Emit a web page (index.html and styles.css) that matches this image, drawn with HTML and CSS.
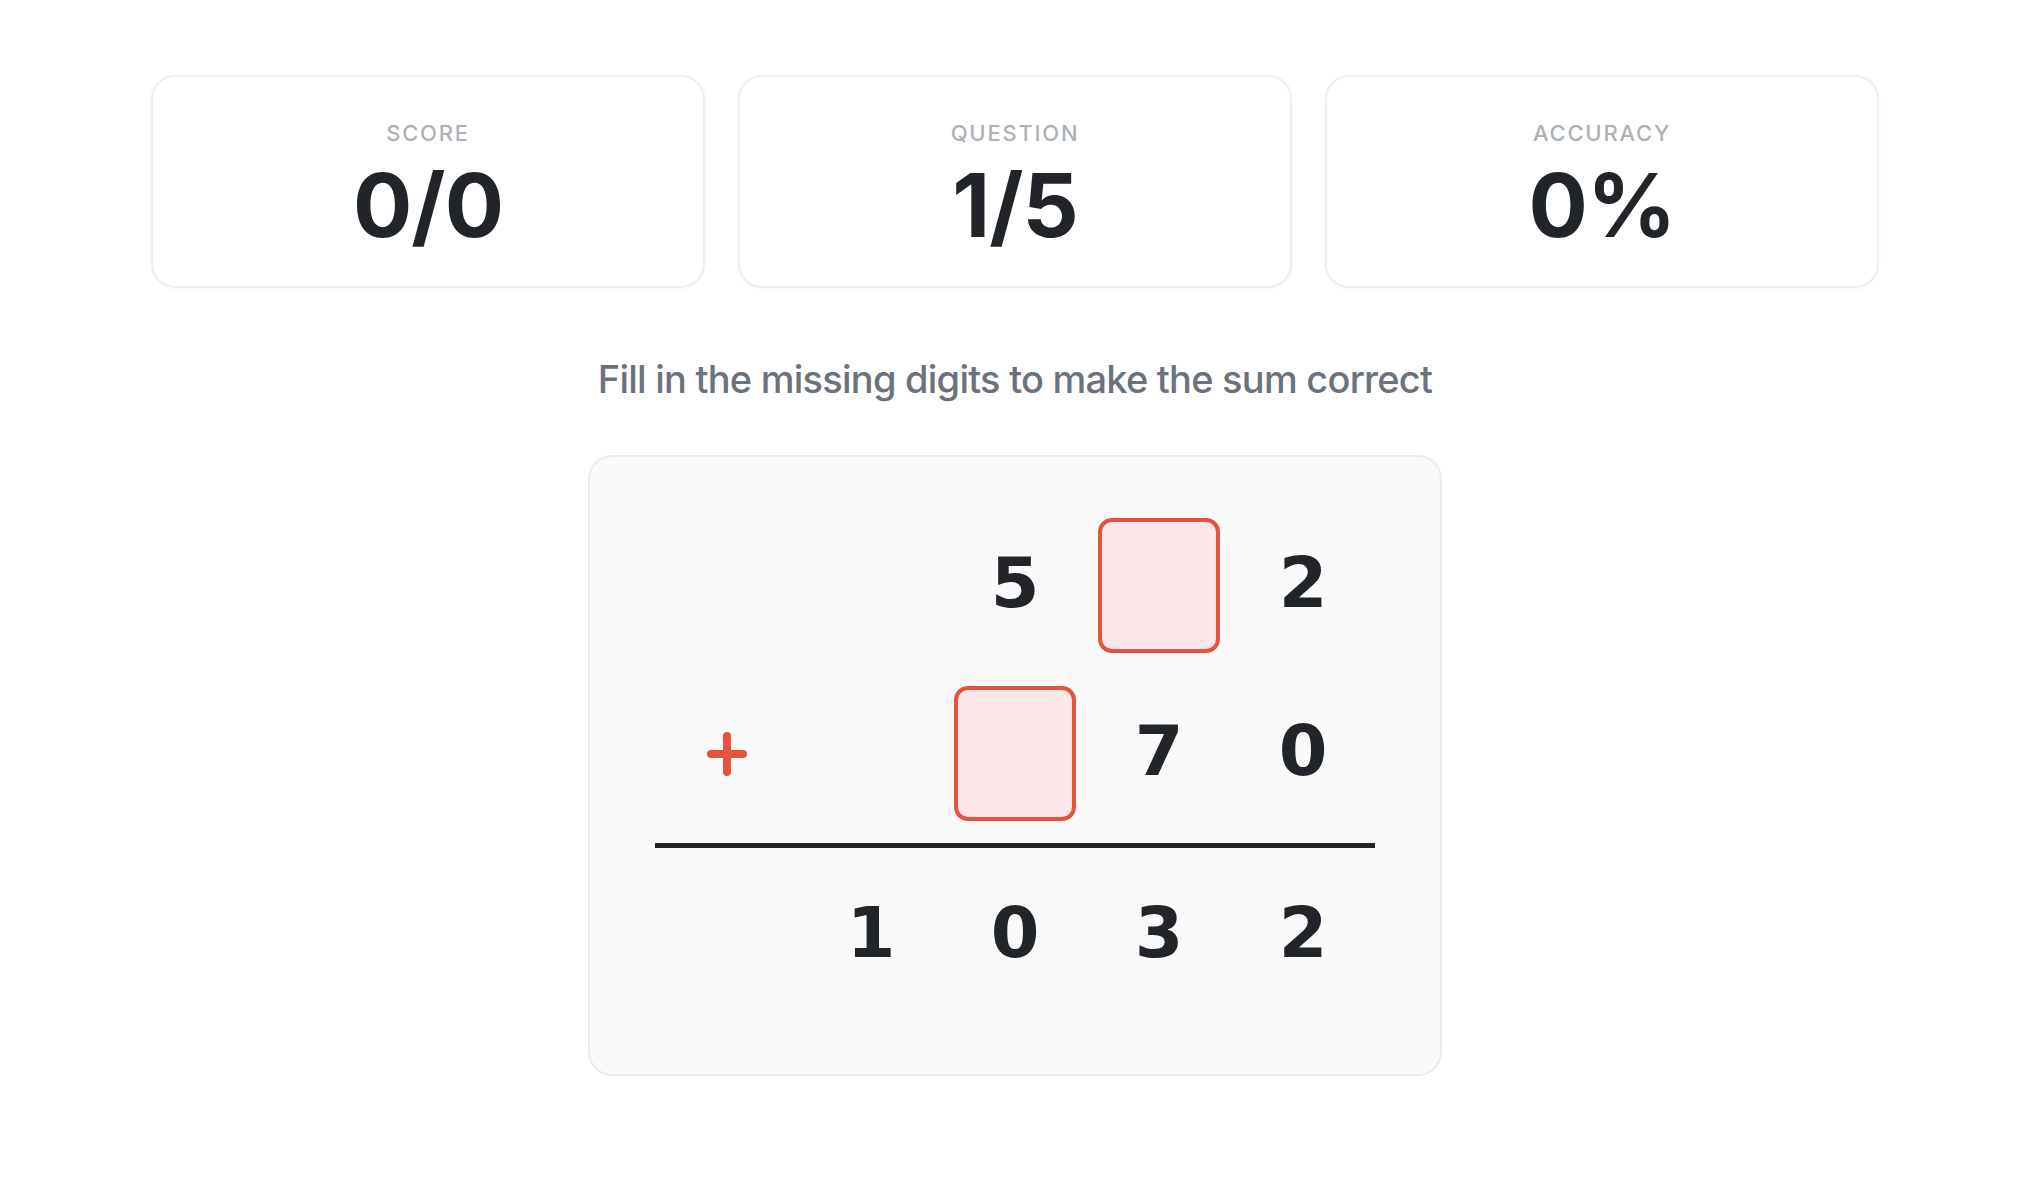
FILE: index.html
```html
<!DOCTYPE html>
<html lang="en">
<head>
  <meta charset="UTF-8">
  <meta name="viewport" content="width=device-width, initial-scale=1.0">
  <title>Missing Digits</title>
  <link rel="stylesheet" href="styles.css">
</head>
<body>
  <main class="game">
    <!-- Stats -->
    <section class="stats">
      <div class="stat-card">
        <div class="stat-label">Score</div>
        <div class="stat-value">0/0</div>
      </div>
      <div class="stat-card">
        <div class="stat-label">Question</div>
        <div class="stat-value">1/5</div>
      </div>
      <div class="stat-card">
        <div class="stat-label">Accuracy</div>
        <div class="stat-value">0%</div>
      </div>
    </section>

    <p class="instructions">Fill in the missing digits to make the sum correct</p>

    <!-- Puzzle -->
    <section class="puzzle">
      <div class="puzzle-row">
        <span class="cell"></span>
        <span class="cell"></span>
        <span class="cell digit">5</span>
        <span class="cell"><input class="digit-input" type="text" maxlength="1" inputmode="numeric"></span>
        <span class="cell digit">2</span>
      </div>
      <div class="puzzle-row row-gap">
        <span class="cell operator">
          <svg width="40" height="44" viewBox="0 0 40 44">
            <path d="M4 22 H36 M20 4 V40" stroke="#e5533f" stroke-width="8" stroke-linecap="round" fill="none"/>
          </svg>
        </span>
        <span class="cell"></span>
        <span class="cell"><input class="digit-input" type="text" maxlength="1" inputmode="numeric"></span>
        <span class="cell digit">7</span>
        <span class="cell digit">0</span>
      </div>
      <div class="sum-line"></div>
      <div class="puzzle-row">
        <span class="cell"></span>
        <span class="cell digit">1</span>
        <span class="cell digit">0</span>
        <span class="cell digit">3</span>
        <span class="cell digit">2</span>
      </div>
    </section>
  </main>
</body>
</html>
```

FILE: styles.css
```css
/* Reset styles */
* {
  margin: 0;
  padding: 0;
  box-sizing: border-box;
}

body {
  font-family: Inter, "Noto Sans", sans-serif;
  background-color: #fff;
  color: #212428;
  padding-right: 10px;
}

.game {
  width: 1728px;
  margin: 75px auto 0;
  display: flex;
  flex-direction: column;
  align-items: center;
}

.stats {
  width: 100%;
  display: grid;
  grid-template-columns: repeat(3, 1fr);
  gap: 33px;
}

.stat-card {
  display: flex;
  flex-direction: column;
  align-items: center;
  padding: 45px 0 37px;
  background: #fff;
  border: 2px solid #eceef0;
  border-radius: 24px;
  box-shadow: 0 1px 4px rgba(0, 0, 0, 0.03);
}

.stat-label {
  font-size: 22px;
  line-height: 1;
  font-weight: 500;
  letter-spacing: 0.08em;
  text-transform: uppercase;
  color: #acb1b8;
  margin-bottom: 17px;
}

.stat-value {
  font-size: 88px;
  line-height: 1;
  font-weight: 700;
  letter-spacing: -0.01em;
  color: #212428;
}

.instructions {
  margin-top: 72px;
  font-size: 38px;
  line-height: 1;
  font-weight: 500;
  letter-spacing: -0.02em;
  color: #6b727c;
}

.puzzle {
  margin-top: 57px;
  width: 854px;
  padding: 61px 0 71px;
  background: #fafafa;
  border: 2px solid #e9ebed;
  border-radius: 24px;
  display: flex;
  flex-direction: column;
  align-items: center;
}

.puzzle-row {
  display: grid;
  grid-template-columns: repeat(5, 144px);
  grid-auto-rows: 135px;
  align-items: center;
  justify-items: center;
}

.row-gap {
  margin-top: 33px;
}

.cell {
  display: flex;
  align-items: center;
  justify-content: center;
}

.digit {
  font-family: "DejaVu Sans", Inter, sans-serif;
  font-size: 70px;
  line-height: 1;
  font-weight: 700;
  color: #212428;
  padding-bottom: 6px;
}

.operator svg {
  display: block;
}

.digit-input {
  width: 122px;
  height: 135px;
  border: 4px solid #e5533f;
  border-radius: 14px;
  background: #fce8e8;
  font-family: "DejaVu Sans", sans-serif;
  font-size: 70px;
  font-weight: 700;
  text-align: center;
  color: #212428;
  outline: none;
}

.sum-line {
  width: 720px;
  height: 5px;
  margin: 22px 0 20px;
  background: #212428;
}
```
